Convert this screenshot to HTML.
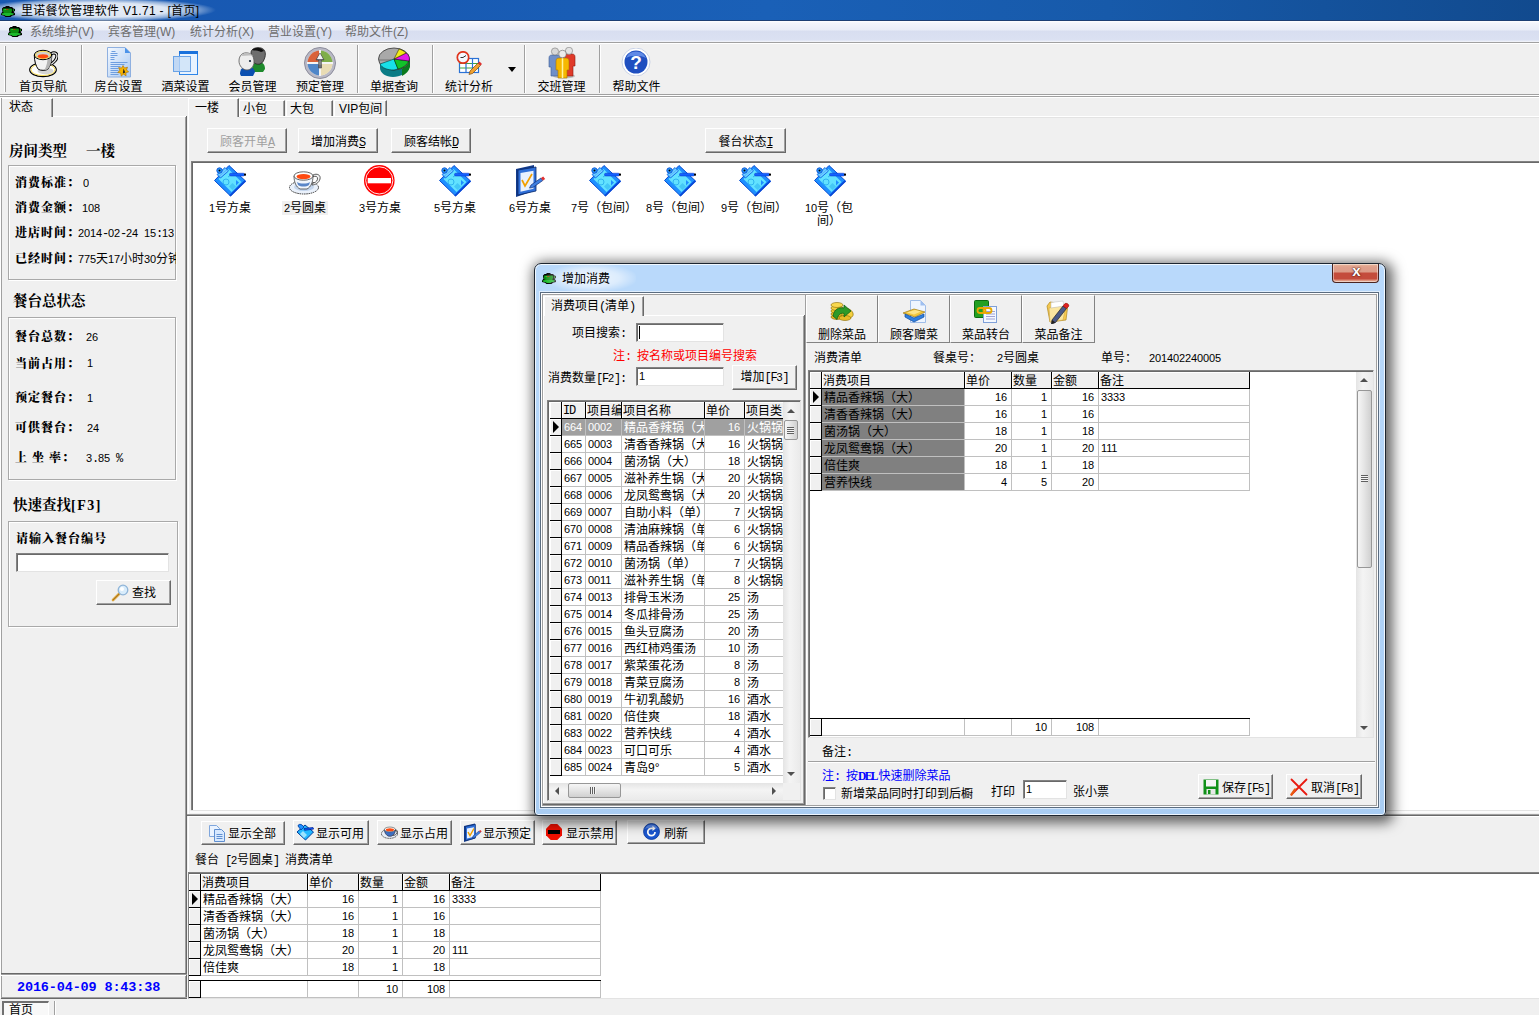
<!DOCTYPE html>
<html lang="zh-CN"><head><meta charset="utf-8"><title>里诺餐饮管理软件 V1.71 - [首页]</title>
<style>
*{box-sizing:border-box}
html,body{margin:0;padding:0}
body{width:1539px;height:1015px;overflow:hidden;background:#f0f0f0;position:relative;
 font-family:"Liberation Sans","Noto Sans CJK SC",sans-serif;font-size:12px;color:#000;line-height:14px}
.a{position:absolute}
.t{position:absolute;white-space:nowrap;height:14px;line-height:14px}
.n{font-family:"Liberation Mono",monospace;font-size:12px;letter-spacing:-1.2px}
.b{font-family:"Liberation Serif","Noto Serif CJK SC",serif;font-weight:900;letter-spacing:1px}
.h14{font-size:14.5px;letter-spacing:0;font-weight:bold}
.btn{position:absolute;background:#f0f0f0;border:1px solid;border-color:#fff #696969 #696969 #fff;box-shadow:inset -1px -1px 0 #a0a0a0, inset 1px 1px 0 #f0f0f0;text-align:center;white-space:nowrap}
.gb{position:absolute;border:1px solid #a9a9a9;box-shadow:inset 1px 1px 0 #fff,1px 1px 0 #fff}
.sunk{position:absolute;background:#fff;border:1px solid;border-color:#828282 #e3e3e3 #e3e3e3 #828282;box-shadow:inset 1px 1px 0 #696969}
.vsep{position:absolute;width:2px;border-left:1px solid #a0a0a0;border-right:1px solid #fff}
.hsep{position:absolute;height:2px;border-top:1px solid #a0a0a0;border-bottom:1px solid #fff}
.tb{position:absolute;text-align:center;width:80px;height:14px;white-space:nowrap}
.grid{position:absolute;background:#fff;overflow:hidden}
.grid .c{position:absolute;height:17px;line-height:17px;border-right:1px solid #c0c0c0;border-bottom:1px solid #c0c0c0;white-space:nowrap;overflow:hidden;padding:1px 2px 0 2px;background:#fff}
.grid .hd{background:#f0f0f0;border-right:1px solid #000;border-bottom:1px solid #000;box-shadow:inset 1px 1px 0 #fff;padding-left:1px}
.grid .ind{background:#f0f0f0;border-right:1px solid #000;border-bottom:1px solid #000;box-shadow:inset 1px 1px 0 #fff;padding:0}
.grid .r{text-align:right;padding-right:4px}
.grid .sel{background:#a0a0a0;color:#fff}
.grid .gr{background:#808080}
.tri{position:absolute;width:0;height:0;border-left:6px solid #000;border-top:6px solid transparent;border-bottom:6px solid transparent}
.d{font-family:"Liberation Sans",sans-serif;font-size:11px;letter-spacing:-.12px}
.grid .n{position:relative;top:-1px}
</style></head>
<body>
<div class="a" style="left:0;top:0;width:1539px;height:21px;background:linear-gradient(90deg,#1858b2 0%,#185ab3 25%,#1a60b7 50%,#175aaa 72%,#114a8e 100%);border-bottom:1px solid #1c3f73"></div>
<div class="a" style="left:-22px;top:-2px;width:238px;height:24px;border-radius:12px;background:radial-gradient(ellipse closest-side at 50% 50%,rgba(255,255,255,.9) 0%,rgba(255,255,255,.85) 60%,rgba(255,255,255,.5) 82%,rgba(255,255,255,0) 100%)"></div>
<svg class="a" style="left:0px;top:6px" width="15" height="11" viewBox="0 0 15 11"><path d="M6 0h3l1 1h2l1.500 1.500 1.500.5v2l-1.500.8 1.500 1.700v1.500l-3 .8-1.500 1.200h-5l-1.500-1.200-3-.8V7.500l1.500-1.700L2 4V2.500L3.500 1h1.500z" fill="#000"/><path d="M3.200 2.400h8.300l.7 1.600-1 3.500h-7.500l-1.100-3.500z" fill="#0c8c10"/><path d="M1.200 7.600l3-.6h6.800l3 .6-1 1.200-2.500.4-1 .8h-3.800l-1-.8-2.500-.4z" fill="#1cb82c"/><rect x="4.600" y="3" width="1" height="1" fill="#30ff40"/><rect x="6" y="3" width="2.400" height=".9" fill="#b04010"/><rect x="13" y="3.300" width="1" height="1.600" fill="#18a020"/></svg><div class="t" style="left:21px;top:3px;font-size:12px;height:16px;line-height:16px;letter-spacing:.3px">里诺餐饮管理软件 V1.71 - [首页]</div>
<div class="a" style="left:0;top:21px;width:1539px;height:21px;background:linear-gradient(180deg,#fff 0,#f3f5fb 2px,#e9edf7 9px,#d8def0 10px,#dbe1f2 19px,#f6f7fb 21px)"></div>
<div class="a" style="left:0;top:42px;width:1539px;height:1px;background:#a0a0a0"></div><div class="a" style="left:0;top:43px;width:1539px;height:1px;background:#fff"></div>
<svg class="a" style="left:7px;top:26px" width="15" height="11" viewBox="0 0 15 11"><path d="M6 0h3l1 1h2l1.500 1.500 1.500.5v2l-1.500.8 1.500 1.700v1.500l-3 .8-1.500 1.200h-5l-1.500-1.200-3-.8V7.500l1.500-1.700L2 4V2.500L3.500 1h1.500z" fill="#000"/><path d="M3.200 2.400h8.300l.7 1.600-1 3.500h-7.500l-1.100-3.500z" fill="#0c8c10"/><path d="M1.200 7.600l3-.6h6.800l3 .6-1 1.200-2.500.4-1 .8h-3.800l-1-.8-2.500-.4z" fill="#1cb82c"/><rect x="4.600" y="3" width="1" height="1" fill="#30ff40"/><rect x="6" y="3" width="2.400" height=".9" fill="#b04010"/><rect x="13" y="3.300" width="1" height="1.600" fill="#18a020"/></svg><div class="t" style="left:30px;top:24px;font-size:12px;color:#6d6d6d;height:16px;line-height:16px">系统维护(V)</div>
<div class="t" style="left:108px;top:24px;font-size:12px;color:#6d6d6d;height:16px;line-height:16px">宾客管理(W)</div>
<div class="t" style="left:190px;top:24px;font-size:12px;color:#6d6d6d;height:16px;line-height:16px">统计分析(X)</div>
<div class="t" style="left:268px;top:24px;font-size:12px;color:#6d6d6d;height:16px;line-height:16px">营业设置(Y)</div>
<div class="t" style="left:345px;top:24px;font-size:12px;color:#6d6d6d;height:16px;line-height:16px">帮助文件(Z)</div>
<div class="vsep" style="left:4px;top:46px;height:46px;border-left-color:#fff;border-right-color:#a0a0a0"></div>
<div class="vsep" style="left:81px;top:45px;height:48px"></div>
<div class="vsep" style="left:357px;top:45px;height:48px"></div>
<div class="vsep" style="left:432px;top:45px;height:48px"></div>
<div class="vsep" style="left:524px;top:45px;height:48px"></div>
<div class="vsep" style="left:599px;top:45px;height:48px"></div>
<div class="tb" style="left:3px;top:80px">首页导航</div>
<div class="tb" style="left:78.5px;top:80px">房台设置</div>
<div class="tb" style="left:145.5px;top:80px">酒菜设置</div>
<div class="tb" style="left:212.5px;top:80px">会员管理</div>
<div class="tb" style="left:280px;top:80px">预定管理</div>
<div class="tb" style="left:354px;top:80px">单据查询</div>
<div class="tb" style="left:429px;top:80px">统计分析</div>
<div class="tb" style="left:521.5px;top:80px">交班管理</div>
<div class="tb" style="left:596.5px;top:80px">帮助文件</div>
<svg class="a" style="left:29px;top:49px" width="29" height="29" viewBox="0 0 29 29"><ellipse cx="14" cy="20.700" rx="13.300" ry="7" fill="#fff" stroke="#000" stroke-width="1.200"/><ellipse cx="14" cy="20.700" rx="12" ry="5.800" fill="none" stroke="#f8dc50" stroke-width="1"/><ellipse cx="16.500" cy="22" rx="8" ry="3.300" fill="#d4d4d4"/>
<path d="M22 5c3-2 6-1 6 2s-3 7-7 8.500" fill="none" stroke="#000" stroke-width="3.200"/><path d="M22 5c3-2 6-1 6 2s-3 7-7 8.500" fill="none" stroke="#e8e8e8" stroke-width="1.300"/>
<path d="M5.300 6c0 6 1.500 11 4 14.300 2 1.400 7.500 1.400 9.500 0 2.500-3.300 4-8.300 4-14.300z" fill="#f2f2f2" stroke="#000" stroke-width="1"/><path d="M15.500 21c1.500 0 2.600-.3 3.300-.8 2.500-3.300 4-8.200 4-14.200h-4c0 6-1.200 11.500-3.300 15z" fill="#b4b4b4"/>
<ellipse cx="14" cy="6" rx="8.700" ry="4.700" fill="#d0d0d0" stroke="#000" stroke-width="1"/><ellipse cx="14" cy="6" rx="7.500" ry="3.600" fill="none" stroke="#f8dc50" stroke-width="1"/><ellipse cx="14" cy="7.300" rx="5.200" ry="2.100" fill="#ff4a10"/></svg>
<svg class="a" style="left:107px;top:47px" width="25" height="31" viewBox="0 0 25 31"><defs><linearGradient id="dg" x1="0" y1="0" x2="1" y2="1"><stop offset="0" stop-color="#f4f9ff"/><stop offset="1" stop-color="#a9c9f2"/></linearGradient></defs>
<path d="M.5 .5h17.500l5.500 5.500v24h-23z" fill="url(#dg)" stroke="#8fb0e0" stroke-width="1"/><path d="M18 .5v5.500h5.500z" fill="#4b93ea"/>
<g stroke="#6f9fe0" stroke-width="1"><path d="M4.500 4.500h4M3.500 6.500h7M3.500 8.500h7M3.500 10.500h4M3.500 12.500h4M3.500 15.500h17M3.500 17.500h14M3.500 19.500h10M3.500 21.500h8M3.500 23.500h8M3.500 25.500h8M3.500 27.500h8"/></g>
<path d="M16 18.500l1.500 2.500 3-.8-1 2.800 2.200 1.800-2.800 1 .2 3-2.600-1.600-2.300 1.900-.5-3-2.900-.6 2-2.200-1.200-2.700 3 .4z" fill="#f6b400" stroke="#a86a00" stroke-width=".6"/><path d="M16.500 21.500l1.800 4-2.500 1z" fill="#222"/></svg>
<svg class="a" style="left:173px;top:51px" width="26" height="24" viewBox="0 0 26 24"><rect x="6.500" y=".5" width="18" height="23" fill="#e8f3ff" stroke="#2f86e8" stroke-width="1"/><rect x="6" y="0" width="19" height="3" fill="#1a72dc"/>
<rect x=".5" y="5.500" width="17" height="15" fill="#b8d4f4" fill-opacity=".85" stroke="#6aa3e6" stroke-width="1"/><rect x="7" y="6" width="10" height="14" fill="#dcebfb" fill-opacity=".7"/></svg>
<svg class="a" style="left:238px;top:47px" width="29" height="30" viewBox="0 0 29 30"><path d="M14 22c0-5 3-7 7-7s6 3 6 7l-2 3h-10z" fill="#1e8a2c"/><path d="M13 5c1-4 6-5 10-4s5 5 4 9c-1 3-2 6-5 7s-7-1-8-4z" fill="#6e6e6e" stroke="#222" stroke-width=".8"/><path d="M14 3c3-3 9-3 12 1l-3 1c-3-2-6-1-9-2z" fill="#111"/>
<path d="M2 27c0-5 3-8 7-8s7 2 8 6l-2 4h-12z" fill="#0b4fb0"/><path d="M1 14c0-6 4-9 9-8s6 5 6 9-3 8-7 8-8-4-8-9z" fill="#ededed" stroke="#555" stroke-width=".8"/><path d="M3 9c3-4 9-4 12 0c-4-1-8 0-12 0z" fill="#bdbdbd"/><circle cx="12" cy="14" r="1.100" fill="#123"/></svg>
<svg class="a" style="left:304px;top:47px" width="32" height="32" viewBox="0 0 32 32"><circle cx="16" cy="16" r="15.500" fill="#b9b9c6" stroke="#8d8d9c" stroke-width="1"/><circle cx="16" cy="16" r="12.500" fill="#eee"/>
<path d="M16 16L16 3.500A12.500 12.500 0 0 1 28.500 16z" fill="#7fae4a"/><path d="M16 16L28.500 16A12.500 12.500 0 0 1 16 28.500z" fill="#e9dcb4"/>
<path d="M16 16L16 28.500A12.500 12.500 0 0 1 3.500 16z" fill="#4f86c8"/><path d="M16 16L3.500 16A12.500 12.500 0 0 1 16 3.500z" fill="#d9623a"/>
<path d="M3 16h26M16 3v26" stroke="#f4f4f4" stroke-width="2"/><path d="M16 6l4 7h-2.500v8h-3v-8h-2.500z" fill="#6d6d78" stroke="#444" stroke-width=".6"/><path d="M16 6.500l3 5.500h-6z" fill="#f4f4f4"/><circle cx="16" cy="16" r="2" fill="#888"/></svg>
<svg class="a" style="left:378px;top:47px" width="33" height="32" viewBox="0 0 33 32"><path d="M2 12v9c0 5 6 9 13 9s14-4 16-9l1-9z" fill="#0b7c86"/><path d="M16 13l8 8v8c4-2 7-5 8-9v-7z" fill="#0a7a1e"/>
<ellipse cx="16" cy="12" rx="15.500" ry="11" fill="#a9a9a9" stroke="#333" stroke-width=".8"/>
<path d="M16 12L2 17c2 4 7 6 14 6l4-1z" fill="#18e0e8" stroke="#033" stroke-width=".6"/><path d="M16 12l4 10c5-1 9-4 11-8z" fill="#12c22a" stroke="#030" stroke-width=".6"/>
<path d="M16 12l15 2c1-3 0-6-3-8z" fill="#e31be8" stroke="#303" stroke-width=".6"/><path d="M16 12l12-6c-2-2-4-3-7-4z" fill="#f2ea18" stroke="#330" stroke-width=".6"/>
<path d="M1 13h12" stroke="#666" stroke-width=".8"/></svg>
<svg class="a" style="left:456px;top:51px" width="27" height="24" viewBox="0 0 27 24"><rect x="3.500" y="7.500" width="19" height="14" fill="#fff" stroke="#2b72d6" stroke-width="1.200"/><path d="M3.500 12.500h19M3.500 17h19" stroke="#3fa640" stroke-width="1.200"/><path d="M10 7.500v14M16.500 7.500v14" stroke="#2b72d6" stroke-width="1.200"/>
<circle cx="7" cy="6.500" r="5.700" fill="#f4f8ff" stroke="#e0341c" stroke-width="1.700"/><path d="M7 6.500l3-2M7 6.500h-2.500" stroke="#333" stroke-width="1"/>
<path d="M14 20l8-8 2.500 2.500-8 8-3.500 1z" fill="#f0a030" stroke="#7a4a10" stroke-width=".7"/><path d="M22 12l1.500-1.500 2.500 2.500-1.500 1.500z" fill="#e03030"/></svg>
<div class="a" style="left:508px;top:67px;width:0;height:0;border-top:5px solid #000;border-left:4.500px solid transparent;border-right:4.500px solid transparent"></div>
<svg class="a" style="left:548px;top:47px" width="28" height="32" viewBox="0 0 28 32"><ellipse cx="16" cy="29" rx="11" ry="2.500" fill="#999" fill-opacity=".6"/>
<path d="M1 11c0-2 1-3 3-3h6c2 0 3 1 3 3v9h-2v9h-8v-9h-2z" fill="#6f8fc8" stroke="#3b5a96" stroke-width=".6"/><circle cx="7" cy="4.500" r="3.600" fill="#d8d8d8" stroke="#777" stroke-width=".6"/>
<path d="M15 10c0-2 1-3 3-3h6c2 0 3 1 3 3v9h-2v10h-8v-10h-2z" fill="#e03a2a" stroke="#8a1c10" stroke-width=".6"/><circle cx="21" cy="3.800" r="3.600" fill="#e4e4e4" stroke="#777" stroke-width=".6"/>
<path d="M8 14c0-2 1-3 3-3h7c2 0 3 1 3 3v9h-2v8h-9v-8h-2z" fill="#f6b800" stroke="#a87400" stroke-width=".6"/><path d="M14.500 11v20" stroke="#fff4a0" stroke-width="1.500"/><circle cx="14.500" cy="7" r="3.800" fill="#ececec" stroke="#666" stroke-width=".6"/></svg>
<svg class="a" style="left:621px;top:48px" width="30" height="28" viewBox="0 0 30 28"><circle cx="15" cy="14" r="14" fill="#fff" stroke="#c9d2e6" stroke-width="1"/><circle cx="15" cy="14" r="11.500" fill="#1f4fc0"/><path d="M5 10a11 11 0 0 1 20 0c-6-3-14-3-20 0z" fill="#5f8ae6"/>
<text x="15" y="21" font-family="Liberation Sans,sans-serif" font-weight="bold" font-size="19" fill="#fff" text-anchor="middle">?</text></svg>
<div class="a" style="left:0;top:94px;width:1539px;height:1px;background:#a0a0a0"></div><div class="a" style="left:0;top:95px;width:1539px;height:1px;background:#fff"></div>
<div class="a" style="left:0;top:96px;width:1539px;height:1px;background:#a0a0a0"></div><div class="a" style="left:0;top:97px;width:1539px;height:1px;background:#fff"></div>
<div class="a" style="left:0;top:98px;width:1px;height:900px;background:#fff"></div>
<div class="a" style="left:1px;top:98px;width:1px;height:900px;background:#a0a0a0"></div>
<div class="a" style="left:2px;top:98px;width:51px;height:19px;border-top:1px solid #fff;border-right:1px solid #696969;box-shadow:inset -1px 0 0 #a0a0a0"></div>
<div class="t" style="left:9px;top:100px">状态</div>
<div class="a" style="left:53px;top:116px;width:133px;height:1px;background:#fff"></div>
<div class="a" style="left:185px;top:117px;width:1px;height:881px;background:#a0a0a0"></div><div class="a" style="left:186px;top:116px;width:1px;height:882px;background:#696969"></div>
<div class="t b h14" style="left:9px;top:143px;height:17px;line-height:17px">房间类型</div><div class="t b h14" style="left:86px;top:143px;height:17px;line-height:17px">一楼</div>
<div class="gb" style="left:8px;top:165px;width:168px;height:115px"></div>
<div class="t b" style="left:15px;top:176px">消费标准：</div><div class="t" style="left:83px;top:176px;max-width:93px;overflow:hidden"><span class="n"><span class="d">0</span></span></div>
<div class="t b" style="left:15px;top:201px">消费金额：</div><div class="t" style="left:82px;top:201px;max-width:94px;overflow:hidden"><span class="n"><span class="d">108</span></span></div>
<div class="t b" style="left:15px;top:226px">进店时间：</div><div class="t" style="left:78px;top:226px;max-width:98px;overflow:hidden"><span class="n"><span class="d">2014</span>-<span class="d">02</span>-<span class="d">24</span>&nbsp;<span class="d">15</span>:<span class="d">13</span></span></div>
<div class="t b" style="left:15px;top:252px">已经时间：</div><div class="t" style="left:78px;top:252px;max-width:98px;overflow:hidden"><span class="n"><span class="d">775</span></span>天<span class="n"><span class="d">17</span></span>小时<span class="n"><span class="d">30</span></span>分钟</div>
<div class="t b h14" style="left:13px;top:293px;height:17px;line-height:17px">餐台总状态</div>
<div class="gb" style="left:8px;top:317px;width:168px;height:163px"></div>
<div class="t b" style="left:15px;top:330px">餐台总数：</div><div class="t n" style="left:86px;top:330px"><span class="d">26</span></div>
<div class="t b" style="left:15px;top:357px">当前占用：</div><div class="t n" style="left:87px;top:356px"><span class="d">1</span></div>
<div class="t b" style="left:15px;top:391px">预定餐台：</div><div class="t n" style="left:87px;top:391px"><span class="d">1</span></div>
<div class="t b" style="left:15px;top:421px">可供餐台：</div><div class="t n" style="left:87px;top:421px"><span class="d">24</span></div>
<div class="t b" style="left:15px;top:451px">上 坐 率：</div><div class="t n" style="left:86px;top:451px"><span class="d">3</span>.<span class="d">85</span> %</div>
<div class="t b h14" style="left:13px;top:497px;height:17px;line-height:17px">快速查找<span style="letter-spacing:1.500px;font-size:14px">[F3]</span></div>
<div class="gb" style="left:8px;top:521px;width:170px;height:106px"></div>
<div class="t b" style="left:16px;top:532px">请输入餐台编号</div>
<div class="sunk" style="left:16px;top:553px;width:153px;height:19px"></div>
<div class="btn" style="left:96px;top:580px;width:75px;height:25px"></div>
<svg class="a" style="left:111px;top:584px" width="18" height="18" viewBox="0 0 18 18"><path d="M2 16l7-7" stroke="#d9a23a" stroke-width="2.600" stroke-linecap="round"/><path d="M2 16l7-7" stroke="#8a5a10" stroke-width=".6"/><circle cx="12" cy="6" r="4.800" fill="#d8ecfb" stroke="#8fb4d8" stroke-width="1.300"/><circle cx="11" cy="5" r="2" fill="#fff"/></svg>
<div class="t" style="left:132px;top:586px">查找</div>
<div class="a" style="left:1px;top:973px;width:186px;height:1px;background:#696969"></div><div class="a" style="left:1px;top:974px;width:186px;height:1px;background:#a0a0a0"></div><div class="a" style="left:1px;top:975px;width:185px;height:1px;background:#fff"></div>
<div class="a" style="left:1px;top:997px;width:186px;height:1px;background:#a0a0a0"></div><div class="a" style="left:1px;top:998px;width:186px;height:1px;background:#696969"></div>
<div class="t" style="left:17px;top:980px;font:bold 13.500px 'Liberation Mono',monospace;color:#0000ff;height:16px;line-height:16px;letter-spacing:-.15px">2016-04-09 8:43:38</div>
<div class="a" style="left:2px;top:1001px;width:47px;height:14px;background:#f8f8f8;border-top:2px solid #707070;border-left:2px solid #707070;border-right:1px solid #fff"></div>
<div class="t" style="left:9px;top:1003px">首页</div>
<div class="vsep" style="left:54px;top:1001px;height:14px"></div>
<div class="a" style="left:188px;top:98px;width:51px;height:19px;border-top:1px solid #fff;border-left:1px solid #fff;border-right:1px solid #696969;box-shadow:inset -1px 0 0 #a0a0a0"></div>
<div class="t" style="left:195px;top:101px">一楼</div>
<div class="a" style="left:239px;top:100px;width:46px;height:16px;border-top:1px solid #fff;border-left:1px solid #fff;border-right:1px solid #696969;box-shadow:inset -1px 0 0 #a0a0a0"></div>
<div class="t" style="left:243px;top:102px">小包</div>
<div class="a" style="left:286px;top:100px;width:47px;height:16px;border-top:1px solid #fff;border-left:1px solid #fff;border-right:1px solid #696969;box-shadow:inset -1px 0 0 #a0a0a0"></div>
<div class="t" style="left:290px;top:102px">大包</div>
<div class="a" style="left:334px;top:100px;width:53px;height:16px;border-top:1px solid #fff;border-left:1px solid #fff;border-right:1px solid #696969;box-shadow:inset -1px 0 0 #a0a0a0"></div>
<div class="t" style="left:339px;top:102px">VIP包间</div>
<div class="a" style="left:239px;top:116px;width:1300px;height:1px;background:#fff"></div><div class="a" style="left:239px;top:117px;width:1300px;height:1px;background:#e3e3e3"></div>
<div class="a" style="left:188px;top:117px;width:1px;height:881px;background:#fff"></div>
<div class="btn" style="left:207px;top:128px;width:80px;height:25px;line-height:25px;padding-top:1px;color:#a0a0a0;">顾客开单<span class="n" style="text-decoration:underline">A</span></div>
<div class="btn" style="left:298px;top:128px;width:80px;height:25px;line-height:25px;padding-top:1px;">增加消费<span class="n" style="text-decoration:underline">S</span></div>
<div class="btn" style="left:391px;top:128px;width:80px;height:25px;line-height:25px;padding-top:1px;">顾客结帐<span class="n" style="text-decoration:underline">D</span></div>
<div class="btn" style="left:705px;top:128px;width:81px;height:25px;line-height:25px;padding-top:1px;">餐台状态<span class="n" style="text-decoration:underline">I</span></div>
<div class="a" style="left:191px;top:161px;width:1348px;height:649px;background:#fff;border-left:1px solid #828282;border-top:1px solid #828282;box-shadow:inset 1px 1px 0 #696969"></div>
<div class="a" style="left:191px;top:810px;width:1348px;height:1px;background:#e3e3e3"></div><div class="a" style="left:190px;top:811px;width:1349px;height:2px;background:#fbfbfb"></div>
<div class="a" style="left:187px;top:814px;width:1352px;height:1px;background:#a0a0a0"></div><div class="a" style="left:187px;top:815px;width:1352px;height:1px;background:#696969"></div><div class="a" style="left:188px;top:816px;width:1351px;height:1px;background:#fff"></div>
<svg class="a" style="left:214px;top:165px" width="32" height="32" viewBox="0 0 32 32"><path d="M15 .5L31.500 16 16.500 31 .5 15.500z" fill="#1e8fff" stroke="#0a4ad0" stroke-width="1"/><path d="M16.500 31.600L32 16.600l-1.200-1.600L15.300 30.200z" fill="#0848d8"/>
<path d="M14.500 4L27.500 17 17.500 27 4.500 14z" fill="#62e2ff"/><path d="M22 15l3 2.500-3 3z" fill="#1e8fff"/>
<circle cx="12" cy="17" r="3" fill="none" stroke="#2fb4f0" stroke-width="1"/><path d="M15 21.500l3.500-3.500 3.500 3.500-3.500 3.500z" fill="#38bdf2" fill-opacity=".7"/><path d="M14 12l3-2" stroke="#2fb4f0" stroke-width="1"/>
<path d="M3 9.500L11 2.500l3.500 3.500L6.500 13z" fill="#52bcff" stroke="#0a60e0" stroke-width=".8"/><path d="M5 10l7-6M6.500 11.500l7-6" stroke="#8fdcff" stroke-width=".8"/>
<circle cx="5.500" cy="5.500" r="2.700" fill="#2c9cff" stroke="#0a50d0" stroke-width=".9"/><circle cx="5.500" cy="5.500" r="1" fill="#000"/>
<rect x="15.500" y="8.200" width="15" height="2.800" rx="1.300" fill="#1262ff" stroke="#0a30c0" stroke-width=".5"/><rect x="30" y="8.600" width="2" height="2" fill="#000"/></svg>
<div class="a" style="left:190px;top:202px;width:80px;text-align:center;line-height:12px"><span class=n><span class="d">1</span></span>号方桌</div>
<svg class="a" style="left:289px;top:170px" width="32" height="25" viewBox="0 0 32 25"><ellipse cx="15" cy="17.500" rx="14.500" ry="6.500" fill="#eaf1fb" stroke="#222" stroke-width=".9" stroke-dasharray="1.500 .7"/><ellipse cx="15" cy="17" rx="10" ry="4" fill="#c4d6ee"/>
<path d="M24 5c4-2 8 0 7 4s-5 6-8 6l0-1.800c2 0 5-1.200 5.500-4s-2-3.500-4.500-2.500z" fill="#f4f4f4" stroke="#333" stroke-width=".8"/>
<path d="M5 6c0 6 2 11 6 13h7c4-2 6-7 6-13z" fill="#f0f5fc" stroke="#444" stroke-width=".8"/><path d="M8 12c3 2 10 2 13 0l-1 3c-3 2-8 2-11 0z" fill="#5a86c8"/>
<ellipse cx="14.500" cy="6" rx="9.500" ry="4.200" fill="#fff" stroke="#555" stroke-width=".9"/><ellipse cx="14.500" cy="6.600" rx="7" ry="2.700" fill="#ff4a10"/></svg>
<div class="a" style="left:282px;top:201px;width:46px;height:14px;background:#f0f0f0"></div>
<div class="a" style="left:265px;top:202px;width:80px;text-align:center;line-height:12px"><span class=n><span class="d">2</span></span>号圆桌</div>
<svg class="a" style="left:364px;top:165px" width="32" height="32" viewBox="0 0 32 32"><circle cx="15.300" cy="15.400" r="15.300" fill="#ff0000"/><circle cx="15.300" cy="15.400" r="13.600" fill="none" stroke="#fff" stroke-width=".9"/><rect x="3.700" y="13" width="23.300" height="5.300" fill="#fff"/></svg>
<div class="a" style="left:340px;top:202px;width:80px;text-align:center;line-height:12px"><span class=n><span class="d">3</span></span>号方桌</div>
<svg class="a" style="left:439px;top:165px" width="32" height="32" viewBox="0 0 32 32"><path d="M15 .5L31.500 16 16.500 31 .5 15.500z" fill="#1e8fff" stroke="#0a4ad0" stroke-width="1"/><path d="M16.500 31.600L32 16.600l-1.200-1.600L15.300 30.200z" fill="#0848d8"/>
<path d="M14.500 4L27.500 17 17.500 27 4.500 14z" fill="#62e2ff"/><path d="M22 15l3 2.500-3 3z" fill="#1e8fff"/>
<circle cx="12" cy="17" r="3" fill="none" stroke="#2fb4f0" stroke-width="1"/><path d="M15 21.500l3.500-3.500 3.500 3.500-3.500 3.500z" fill="#38bdf2" fill-opacity=".7"/><path d="M14 12l3-2" stroke="#2fb4f0" stroke-width="1"/>
<path d="M3 9.500L11 2.500l3.500 3.500L6.500 13z" fill="#52bcff" stroke="#0a60e0" stroke-width=".8"/><path d="M5 10l7-6M6.500 11.500l7-6" stroke="#8fdcff" stroke-width=".8"/>
<circle cx="5.500" cy="5.500" r="2.700" fill="#2c9cff" stroke="#0a50d0" stroke-width=".9"/><circle cx="5.500" cy="5.500" r="1" fill="#000"/>
<rect x="15.500" y="8.200" width="15" height="2.800" rx="1.300" fill="#1262ff" stroke="#0a30c0" stroke-width=".5"/><rect x="30" y="8.600" width="2" height="2" fill="#000"/></svg>
<div class="a" style="left:415px;top:202px;width:80px;text-align:center;line-height:12px"><span class=n><span class="d">5</span></span>号方桌</div>
<svg class="a" style="left:514px;top:165px" width="32" height="32" viewBox="0 0 32 32"><path d="M2 4l18-4v26l-18 6z" fill="#123a8a"/><path d="M4 5l18-3v24l-18 4z" fill="#2f6fd8" stroke="#0a2a6a" stroke-width=".8"/><path d="M6.500 8l13-2.200v18l-13 3z" fill="#e8f1ff"/>
<path d="M8 15l3 6 7-12" fill="none" stroke="#f2a000" stroke-width="1.700"/>
<path d="M17 20l10-7 1.800 2.500-10 7-3.300.6z" fill="#3f7fe0" stroke="#12307a" stroke-width=".7"/><path d="M27 13l2.200-1.500 2 2.400-2.400 1.600z" fill="#e03030"/></svg>
<div class="a" style="left:490px;top:202px;width:80px;text-align:center;line-height:12px"><span class=n><span class="d">6</span></span>号方桌</div>
<svg class="a" style="left:589px;top:165px" width="32" height="32" viewBox="0 0 32 32"><path d="M15 .5L31.500 16 16.500 31 .5 15.500z" fill="#1e8fff" stroke="#0a4ad0" stroke-width="1"/><path d="M16.500 31.600L32 16.600l-1.200-1.600L15.300 30.200z" fill="#0848d8"/>
<path d="M14.500 4L27.500 17 17.500 27 4.500 14z" fill="#62e2ff"/><path d="M22 15l3 2.500-3 3z" fill="#1e8fff"/>
<circle cx="12" cy="17" r="3" fill="none" stroke="#2fb4f0" stroke-width="1"/><path d="M15 21.500l3.500-3.500 3.500 3.500-3.500 3.500z" fill="#38bdf2" fill-opacity=".7"/><path d="M14 12l3-2" stroke="#2fb4f0" stroke-width="1"/>
<path d="M3 9.500L11 2.500l3.500 3.500L6.500 13z" fill="#52bcff" stroke="#0a60e0" stroke-width=".8"/><path d="M5 10l7-6M6.500 11.500l7-6" stroke="#8fdcff" stroke-width=".8"/>
<circle cx="5.500" cy="5.500" r="2.700" fill="#2c9cff" stroke="#0a50d0" stroke-width=".9"/><circle cx="5.500" cy="5.500" r="1" fill="#000"/>
<rect x="15.500" y="8.200" width="15" height="2.800" rx="1.300" fill="#1262ff" stroke="#0a30c0" stroke-width=".5"/><rect x="30" y="8.600" width="2" height="2" fill="#000"/></svg>
<div class="a" style="left:564px;top:202px;width:80px;text-align:center;line-height:12px"><span class=n><span class="d">7</span></span>号（包间）</div>
<svg class="a" style="left:664px;top:165px" width="32" height="32" viewBox="0 0 32 32"><path d="M15 .5L31.500 16 16.500 31 .5 15.500z" fill="#1e8fff" stroke="#0a4ad0" stroke-width="1"/><path d="M16.500 31.600L32 16.600l-1.200-1.600L15.300 30.200z" fill="#0848d8"/>
<path d="M14.500 4L27.500 17 17.500 27 4.500 14z" fill="#62e2ff"/><path d="M22 15l3 2.500-3 3z" fill="#1e8fff"/>
<circle cx="12" cy="17" r="3" fill="none" stroke="#2fb4f0" stroke-width="1"/><path d="M15 21.500l3.500-3.500 3.500 3.500-3.500 3.500z" fill="#38bdf2" fill-opacity=".7"/><path d="M14 12l3-2" stroke="#2fb4f0" stroke-width="1"/>
<path d="M3 9.500L11 2.500l3.500 3.500L6.500 13z" fill="#52bcff" stroke="#0a60e0" stroke-width=".8"/><path d="M5 10l7-6M6.500 11.500l7-6" stroke="#8fdcff" stroke-width=".8"/>
<circle cx="5.500" cy="5.500" r="2.700" fill="#2c9cff" stroke="#0a50d0" stroke-width=".9"/><circle cx="5.500" cy="5.500" r="1" fill="#000"/>
<rect x="15.500" y="8.200" width="15" height="2.800" rx="1.300" fill="#1262ff" stroke="#0a30c0" stroke-width=".5"/><rect x="30" y="8.600" width="2" height="2" fill="#000"/></svg>
<div class="a" style="left:639px;top:202px;width:80px;text-align:center;line-height:12px"><span class=n><span class="d">8</span></span>号（包间）</div>
<svg class="a" style="left:739px;top:165px" width="32" height="32" viewBox="0 0 32 32"><path d="M15 .5L31.500 16 16.500 31 .5 15.500z" fill="#1e8fff" stroke="#0a4ad0" stroke-width="1"/><path d="M16.500 31.600L32 16.600l-1.200-1.600L15.300 30.200z" fill="#0848d8"/>
<path d="M14.500 4L27.500 17 17.500 27 4.500 14z" fill="#62e2ff"/><path d="M22 15l3 2.500-3 3z" fill="#1e8fff"/>
<circle cx="12" cy="17" r="3" fill="none" stroke="#2fb4f0" stroke-width="1"/><path d="M15 21.500l3.500-3.500 3.500 3.500-3.500 3.500z" fill="#38bdf2" fill-opacity=".7"/><path d="M14 12l3-2" stroke="#2fb4f0" stroke-width="1"/>
<path d="M3 9.500L11 2.500l3.500 3.500L6.500 13z" fill="#52bcff" stroke="#0a60e0" stroke-width=".8"/><path d="M5 10l7-6M6.500 11.500l7-6" stroke="#8fdcff" stroke-width=".8"/>
<circle cx="5.500" cy="5.500" r="2.700" fill="#2c9cff" stroke="#0a50d0" stroke-width=".9"/><circle cx="5.500" cy="5.500" r="1" fill="#000"/>
<rect x="15.500" y="8.200" width="15" height="2.800" rx="1.300" fill="#1262ff" stroke="#0a30c0" stroke-width=".5"/><rect x="30" y="8.600" width="2" height="2" fill="#000"/></svg>
<div class="a" style="left:714px;top:202px;width:80px;text-align:center;line-height:12px"><span class=n><span class="d">9</span></span>号（包间）</div>
<svg class="a" style="left:814px;top:165px" width="32" height="32" viewBox="0 0 32 32"><path d="M15 .5L31.500 16 16.500 31 .5 15.500z" fill="#1e8fff" stroke="#0a4ad0" stroke-width="1"/><path d="M16.500 31.600L32 16.600l-1.200-1.600L15.300 30.200z" fill="#0848d8"/>
<path d="M14.500 4L27.500 17 17.500 27 4.500 14z" fill="#62e2ff"/><path d="M22 15l3 2.500-3 3z" fill="#1e8fff"/>
<circle cx="12" cy="17" r="3" fill="none" stroke="#2fb4f0" stroke-width="1"/><path d="M15 21.500l3.500-3.500 3.500 3.500-3.500 3.500z" fill="#38bdf2" fill-opacity=".7"/><path d="M14 12l3-2" stroke="#2fb4f0" stroke-width="1"/>
<path d="M3 9.500L11 2.500l3.500 3.500L6.500 13z" fill="#52bcff" stroke="#0a60e0" stroke-width=".8"/><path d="M5 10l7-6M6.500 11.500l7-6" stroke="#8fdcff" stroke-width=".8"/>
<circle cx="5.500" cy="5.500" r="2.700" fill="#2c9cff" stroke="#0a50d0" stroke-width=".9"/><circle cx="5.500" cy="5.500" r="1" fill="#000"/>
<rect x="15.500" y="8.200" width="15" height="2.800" rx="1.300" fill="#1262ff" stroke="#0a30c0" stroke-width=".5"/><rect x="30" y="8.600" width="2" height="2" fill="#000"/></svg>
<div class="a" style="left:789px;top:202px;width:80px;text-align:center;line-height:12px"><span class=n><span class="d">10</span></span>号（包<br>间）</div>
<div class="btn" style="left:201px;top:821px;width:84px;height:24px"></div>
<svg class="a" style="left:208px;top:824px" width="18" height="18" viewBox="0 0 18 18"><path d="M1.500 1.500h7l3 3v8h-10z" fill="#eaf3ff" stroke="#7fa6dc"/><path d="M6.500 5.500h7l3 3v9h-10z" fill="#d6e8ff" stroke="#5f8fd0"/><path d="M8.500 10.500h6M8.500 12.500h6M8.500 14.500h6" stroke="#5f8fd0"/></svg>
<div class="t" style="left:228px;top:827px">显示全部</div>
<div class="btn" style="left:293px;top:820px;width:76px;height:25px"></div>
<svg class="a" style="left:296px;top:823px" width="18" height="18" viewBox="0 0 18 18"><path d="M9 2L17.500 9 9.500 17 1 9z" fill="#22b8ff" stroke="#003a9a" stroke-width="1"/><path d="M2 3c0-2 3-2 4-1l2 2-3 3z" fill="#1e90ff" stroke="#003a9a" stroke-width=".8"/><path d="M8 5.500l9-1 .6 1.600-9 1.200z" fill="#1060ff" stroke="#001a8a" stroke-width=".7"/><path d="M7 8l4 4-3 3-4-4z" fill="#9be4ff"/></svg>
<div class="t" style="left:316px;top:827px">显示可用</div>
<div class="btn" style="left:377px;top:820px;width:75px;height:25px"></div>
<svg class="a" style="left:381px;top:825px" width="17" height="14" viewBox="0 0 20 16"><ellipse cx="10" cy="10" rx="9.500" ry="5.500" fill="#e8eef8" stroke="#222" stroke-width=".9" stroke-dasharray="1.400 .6"/><path d="M4 5c0 4 2 7 5 8h3c3-1 5-4 5-8z" fill="#3f6fc0" stroke="#223" stroke-width=".7"/><ellipse cx="10.500" cy="5" rx="6.500" ry="2.800" fill="#fff" stroke="#444" stroke-width=".7"/><ellipse cx="10.500" cy="5.300" rx="4.800" ry="1.800" fill="#ff4a10"/><path d="M16 6c3-1 4 1 3 3s-3 3-5 3" fill="none" stroke="#333" stroke-width="1"/></svg>
<div class="t" style="left:400px;top:827px">显示占用</div>
<div class="btn" style="left:460px;top:820px;width:75px;height:25px"></div>
<svg class="a" style="left:463px;top:823px" width="19" height="19" viewBox="0 0 19 19"><path d="M1 3l11-2.500v15l-11 3.500z" fill="#123a8a"/><path d="M2.500 3.500l10-2v13.500l-10 2.500z" fill="#2f6fd8" stroke="#0a2a6a" stroke-width=".6"/><path d="M4 5.500l7-1.200v9.500l-7 1.800z" fill="#e8f1ff"/><path d="M5 9l2 3.500 4-7" fill="none" stroke="#f2a000" stroke-width="1.500"/><path d="M10 13l6-5 1.400 1.600-6 5-2 .5z" fill="#3f7fe0" stroke="#12307a" stroke-width=".5"/><path d="M16 8l1.300-1 1.400 1.500-1.300 1.100z" fill="#e03030"/></svg>
<div class="t" style="left:483px;top:827px">显示预定</div>
<div class="btn" style="left:542px;top:820px;width:75px;height:25px"></div>
<svg class="a" style="left:546px;top:824px" width="16" height="16" viewBox="0 0 16 16"><path d="M4.700 0h6.600l4.700 4.700v6.600l-4.700 4.700h-6.600l-4.700-4.700v-6.600z" fill="#f01000"/><rect x="2" y="6" width="12" height="4" fill="#000"/></svg>
<div class="t" style="left:566px;top:827px">显示禁用</div>
<div class="btn" style="left:627px;top:820px;width:78px;height:24px"></div>
<svg class="a" style="left:643px;top:823px" width="17" height="17" viewBox="0 0 17 17"><circle cx="8.500" cy="8.500" r="8" fill="#1a56d0" stroke="#0c3a9c" stroke-width=".8"/><path d="M2 6a7 7 0 0 1 13 0c-4-2-9-2-13 0z" fill="#5a8cf0"/><path d="M12 9a3.600 3.600 0 1 1-3.600-3.600h1.500" fill="none" stroke="#fff" stroke-width="1.800"/><path d="M9.500 2.800l3.200 2.600-3.200 2.600z" fill="#fff"/></svg>
<div class="t" style="left:664px;top:827px">刷新</div>
<div class="t" style="left:195px;top:853px">餐台<span class="n">&nbsp;[<span class="d">2</span></span>号圆桌<span class="n">]&nbsp;</span>消费清单</div>
<div class="a" style="left:188px;top:872px;width:1351px;height:127px;background:#fff;border-top:1px solid #828282;border-left:1px solid #828282;border-bottom:1px solid #e3e3e3"></div>
<div class="a" style="left:189px;top:873px;width:1350px;height:1px;background:#696969"></div>
<div class="grid" style="left:189px;top:874px;width:413px;height:124px">
<div class="c ind" style="left:0;top:0;width:12px"></div><div class="c hd" style="left:12px;top:0;width:107px">消费项目</div><div class="c hd" style="left:119px;top:0;width:51px">单价</div><div class="c hd" style="left:170px;top:0;width:44px">数量</div><div class="c hd" style="left:214px;top:0;width:47px">金额</div><div class="c hd" style="left:261px;top:0;width:151px">备注</div>
<div class="c ind" style="left:0;top:17px;width:12px"><div class="tri" style="left:3px;top:2px"></div></div><div class="c" style="left:12px;top:17px;width:107px">精品香辣锅（大）</div><div class="c r" style="left:119px;top:17px;width:51px"><span class="n"><span class="d">16</span></span></div><div class="c r" style="left:170px;top:17px;width:44px"><span class="n"><span class="d">1</span></span></div><div class="c r" style="left:214px;top:17px;width:47px"><span class="n"><span class="d">16</span></span></div><div class="c" style="left:261px;top:17px;width:151px"><span class="n"><span class="d">3333</span></span></div>
<div class="c ind" style="left:0;top:34px;width:12px"></div><div class="c" style="left:12px;top:34px;width:107px">清香香辣锅（大）</div><div class="c r" style="left:119px;top:34px;width:51px"><span class="n"><span class="d">16</span></span></div><div class="c r" style="left:170px;top:34px;width:44px"><span class="n"><span class="d">1</span></span></div><div class="c r" style="left:214px;top:34px;width:47px"><span class="n"><span class="d">16</span></span></div><div class="c" style="left:261px;top:34px;width:151px"></div>
<div class="c ind" style="left:0;top:51px;width:12px"></div><div class="c" style="left:12px;top:51px;width:107px">菌汤锅（大）</div><div class="c r" style="left:119px;top:51px;width:51px"><span class="n"><span class="d">18</span></span></div><div class="c r" style="left:170px;top:51px;width:44px"><span class="n"><span class="d">1</span></span></div><div class="c r" style="left:214px;top:51px;width:47px"><span class="n"><span class="d">18</span></span></div><div class="c" style="left:261px;top:51px;width:151px"></div>
<div class="c ind" style="left:0;top:68px;width:12px"></div><div class="c" style="left:12px;top:68px;width:107px">龙凤鸳鸯锅（大）</div><div class="c r" style="left:119px;top:68px;width:51px"><span class="n"><span class="d">20</span></span></div><div class="c r" style="left:170px;top:68px;width:44px"><span class="n"><span class="d">1</span></span></div><div class="c r" style="left:214px;top:68px;width:47px"><span class="n"><span class="d">20</span></span></div><div class="c" style="left:261px;top:68px;width:151px"><span class="n"><span class="d">111</span></span></div>
<div class="c ind" style="left:0;top:85px;width:12px"></div><div class="c" style="left:12px;top:85px;width:107px">倍佳爽</div><div class="c r" style="left:119px;top:85px;width:51px"><span class="n"><span class="d">18</span></span></div><div class="c r" style="left:170px;top:85px;width:44px"><span class="n"><span class="d">1</span></span></div><div class="c r" style="left:214px;top:85px;width:47px"><span class="n"><span class="d">18</span></span></div><div class="c" style="left:261px;top:85px;width:151px"></div>
<div class="a" style="left:0;top:106px;width:412px;height:1px;background:#000"></div><div class="c ind" style="left:0;top:107px;width:12px"></div><div class="c r" style="left:12px;top:107px;width:107px"></div><div class="c r" style="left:119px;top:107px;width:51px"></div><div class="c r" style="left:170px;top:107px;width:44px"><span class="n"><span class="d">10</span></span></div><div class="c r" style="left:214px;top:107px;width:47px"><span class="n"><span class="d">108</span></span></div><div class="c r" style="left:261px;top:107px;width:151px"></div>
</div>
<div class="a" style="left:534px;top:263px;width:852px;height:553px;border-radius:7px 7px 4px 4px;background:linear-gradient(180deg,#b9d9fb 0,#b9d9fb 30px,#a9cdf3 100%);border:1px solid #1e2630;box-shadow:3px 3px 13px 4px rgba(0,0,0,.6),inset 0 0 0 1px rgba(255,255,255,.8)"></div>
<svg class="a" style="left:541px;top:273px" width="15" height="11" viewBox="0 0 15 11"><path d="M6 0h3l1 1h2l1.500 1.500 1.500.5v2l-1.500.8 1.500 1.700v1.500l-3 .8-1.500 1.200h-5l-1.500-1.200-3-.8V7.500l1.500-1.700L2 4V2.500L3.500 1h1.500z" fill="#000"/><path d="M3.200 2.400h8.300l.7 1.600-1 3.500h-7.500l-1.100-3.500z" fill="#0c8c10"/><path d="M1.200 7.600l3-.6h6.800l3 .6-1 1.200-2.500.4-1 .8h-3.800l-1-.8-2.500-.4z" fill="#1cb82c"/><rect x="4.600" y="3" width="1" height="1" fill="#30ff40"/><rect x="6" y="3" width="2.400" height=".9" fill="#b04010"/><rect x="13" y="3.300" width="1" height="1.600" fill="#18a020"/></svg><div class="a" style="left:546px;top:264px;width:90px;height:28px;border-radius:14px;background:radial-gradient(ellipse,rgba(255,255,255,.8),rgba(255,255,255,.5) 45%,rgba(255,255,255,0) 75%)"></div>
<div class="t" style="left:562px;top:272px">增加消费</div>
<div class="a" style="left:1332px;top:264px;width:47px;height:19px;border-radius:0 0 4px 4px;border:1px solid #4a2420;border-top:none;background:linear-gradient(180deg,#e8b89c 0,#e0a08c 3px,#dc9c88 8px,#c44c3c 9px,#c44c3c 15px,#dc8c78 16px,#ecc0a0 19px);box-shadow:inset 0 0 0 1px rgba(255,255,255,.45)"></div>
<div class="t" style="left:1349px;top:263px;width:15px;text-align:center;font:bold 15px 'Liberation Sans',sans-serif;color:#fff;height:16px;line-height:16px;text-shadow:0 0 2px #4a1008,0 0 1px #4a1008">x</div>
<div class="a" style="left:540px;top:292px;width:839px;height:516px;background:#f0f0f0;border:1px solid #5a6c80;box-shadow:0 0 0 1px rgba(255,255,255,.55),inset 0 0 0 1px #fff,inset 0 0 0 2px #a0a0a0"></div>
<div class="a" style="left:544px;top:296px;width:100px;height:20px;border-top:1px solid #fff;border-left:1px solid #fff;border-right:1px solid #696969;box-shadow:inset -1px 0 0 #a0a0a0"></div>
<div class="t" style="left:551px;top:299px">消费项目<span class="n">(</span>清单<span class="n">)</span></div>
<div class="a" style="left:644px;top:315px;width:160px;height:1px;background:#fff"></div>
<div class="a" style="left:543px;top:296px;width:1px;height:508px;background:#fff"></div>
<div class="a" style="left:803px;top:316px;width:1px;height:488px;background:#a0a0a0"></div><div class="a" style="left:804px;top:315px;width:1px;height:490px;background:#696969"></div>
<div class="a" style="left:543px;top:803px;width:261px;height:1px;background:#a0a0a0"></div><div class="a" style="left:543px;top:804px;width:262px;height:1px;background:#696969"></div>
<div class="t" style="left:572px;top:326px">项目搜索<span class="n">:</span></div>
<div class="sunk" style="left:636px;top:323px;width:88px;height:19px"></div><div class="a" style="left:639px;top:326px;width:1px;height:13px;background:#000"></div>
<div class="t" style="left:613px;top:349px;color:#ff0000">注<span class="n">:&nbsp;</span>按名称或项目编号搜索</div>
<div class="t" style="left:548px;top:371px">消费数量<span class="n">[F<span class="d">2</span>]:</span></div>
<div class="sunk" style="left:636px;top:367px;width:88px;height:19px"></div><div class="t n" style="left:639px;top:369px"><span class="d">1</span></div>
<div class="btn" style="left:732px;top:365px;width:65px;height:25px;line-height:23px">增加<span class="n">[F<span class="d">3</span>]</span></div>
<div class="a" style="left:547px;top:400px;width:254px;height:401px;background:#fff;border:1px solid;border-color:#828282 #e3e3e3 #e3e3e3 #828282;box-shadow:inset 1px 1px 0 #696969"></div>
<div class="grid" style="left:550px;top:402px;width:233px;height:376px">
<div class="c ind" style="left:0;top:0;width:12px"></div><div class="c hd" style="left:12px;top:0;width:24px"><span class="n">ID</span></div><div class="c hd" style="left:36px;top:0;width:36px">项目编</div><div class="c hd" style="left:72px;top:0;width:83px">项目名称</div><div class="c hd" style="left:155px;top:0;width:40px">单价</div><div class="c hd" style="left:195px;top:0;width:39px">项目类</div>
<div class="c ind" style="left:0;top:17px;width:12px"><div class="tri" style="left:3px;top:2px"></div></div><div class="c sel" style="left:12px;top:17px;width:24px"><span class="n"><span class="d">664</span></span></div><div class="c sel" style="left:36px;top:17px;width:36px"><span class="n"><span class="d">0002</span></span></div><div class="c sel" style="left:72px;top:17px;width:83px">精品香辣锅（大</div><div class="c r sel" style="left:155px;top:17px;width:40px"><span class="n"><span class="d">16</span></span></div><div class="c sel" style="left:195px;top:17px;width:39px">火锅锅</div>
<div class="c ind" style="left:0;top:34px;width:12px"></div><div class="c" style="left:12px;top:34px;width:24px"><span class="n"><span class="d">665</span></span></div><div class="c" style="left:36px;top:34px;width:36px"><span class="n"><span class="d">0003</span></span></div><div class="c" style="left:72px;top:34px;width:83px">清香香辣锅（大</div><div class="c r" style="left:155px;top:34px;width:40px"><span class="n"><span class="d">16</span></span></div><div class="c" style="left:195px;top:34px;width:39px">火锅锅</div>
<div class="c ind" style="left:0;top:51px;width:12px"></div><div class="c" style="left:12px;top:51px;width:24px"><span class="n"><span class="d">666</span></span></div><div class="c" style="left:36px;top:51px;width:36px"><span class="n"><span class="d">0004</span></span></div><div class="c" style="left:72px;top:51px;width:83px">菌汤锅（大）</div><div class="c r" style="left:155px;top:51px;width:40px"><span class="n"><span class="d">18</span></span></div><div class="c" style="left:195px;top:51px;width:39px">火锅锅</div>
<div class="c ind" style="left:0;top:68px;width:12px"></div><div class="c" style="left:12px;top:68px;width:24px"><span class="n"><span class="d">667</span></span></div><div class="c" style="left:36px;top:68px;width:36px"><span class="n"><span class="d">0005</span></span></div><div class="c" style="left:72px;top:68px;width:83px">滋补养生锅（大</div><div class="c r" style="left:155px;top:68px;width:40px"><span class="n"><span class="d">20</span></span></div><div class="c" style="left:195px;top:68px;width:39px">火锅锅</div>
<div class="c ind" style="left:0;top:85px;width:12px"></div><div class="c" style="left:12px;top:85px;width:24px"><span class="n"><span class="d">668</span></span></div><div class="c" style="left:36px;top:85px;width:36px"><span class="n"><span class="d">0006</span></span></div><div class="c" style="left:72px;top:85px;width:83px">龙凤鸳鸯锅（大</div><div class="c r" style="left:155px;top:85px;width:40px"><span class="n"><span class="d">20</span></span></div><div class="c" style="left:195px;top:85px;width:39px">火锅锅</div>
<div class="c ind" style="left:0;top:102px;width:12px"></div><div class="c" style="left:12px;top:102px;width:24px"><span class="n"><span class="d">669</span></span></div><div class="c" style="left:36px;top:102px;width:36px"><span class="n"><span class="d">0007</span></span></div><div class="c" style="left:72px;top:102px;width:83px">自助小料（单）</div><div class="c r" style="left:155px;top:102px;width:40px"><span class="n"><span class="d">7</span></span></div><div class="c" style="left:195px;top:102px;width:39px">火锅锅</div>
<div class="c ind" style="left:0;top:119px;width:12px"></div><div class="c" style="left:12px;top:119px;width:24px"><span class="n"><span class="d">670</span></span></div><div class="c" style="left:36px;top:119px;width:36px"><span class="n"><span class="d">0008</span></span></div><div class="c" style="left:72px;top:119px;width:83px">清油麻辣锅（单</div><div class="c r" style="left:155px;top:119px;width:40px"><span class="n"><span class="d">6</span></span></div><div class="c" style="left:195px;top:119px;width:39px">火锅锅</div>
<div class="c ind" style="left:0;top:136px;width:12px"></div><div class="c" style="left:12px;top:136px;width:24px"><span class="n"><span class="d">671</span></span></div><div class="c" style="left:36px;top:136px;width:36px"><span class="n"><span class="d">0009</span></span></div><div class="c" style="left:72px;top:136px;width:83px">精品香辣锅（单</div><div class="c r" style="left:155px;top:136px;width:40px"><span class="n"><span class="d">6</span></span></div><div class="c" style="left:195px;top:136px;width:39px">火锅锅</div>
<div class="c ind" style="left:0;top:153px;width:12px"></div><div class="c" style="left:12px;top:153px;width:24px"><span class="n"><span class="d">672</span></span></div><div class="c" style="left:36px;top:153px;width:36px"><span class="n"><span class="d">0010</span></span></div><div class="c" style="left:72px;top:153px;width:83px">菌汤锅（单）</div><div class="c r" style="left:155px;top:153px;width:40px"><span class="n"><span class="d">7</span></span></div><div class="c" style="left:195px;top:153px;width:39px">火锅锅</div>
<div class="c ind" style="left:0;top:170px;width:12px"></div><div class="c" style="left:12px;top:170px;width:24px"><span class="n"><span class="d">673</span></span></div><div class="c" style="left:36px;top:170px;width:36px"><span class="n"><span class="d">0011</span></span></div><div class="c" style="left:72px;top:170px;width:83px">滋补养生锅（单</div><div class="c r" style="left:155px;top:170px;width:40px"><span class="n"><span class="d">8</span></span></div><div class="c" style="left:195px;top:170px;width:39px">火锅锅</div>
<div class="c ind" style="left:0;top:187px;width:12px"></div><div class="c" style="left:12px;top:187px;width:24px"><span class="n"><span class="d">674</span></span></div><div class="c" style="left:36px;top:187px;width:36px"><span class="n"><span class="d">0013</span></span></div><div class="c" style="left:72px;top:187px;width:83px">排骨玉米汤</div><div class="c r" style="left:155px;top:187px;width:40px"><span class="n"><span class="d">25</span></span></div><div class="c" style="left:195px;top:187px;width:39px">汤</div>
<div class="c ind" style="left:0;top:204px;width:12px"></div><div class="c" style="left:12px;top:204px;width:24px"><span class="n"><span class="d">675</span></span></div><div class="c" style="left:36px;top:204px;width:36px"><span class="n"><span class="d">0014</span></span></div><div class="c" style="left:72px;top:204px;width:83px">冬瓜排骨汤</div><div class="c r" style="left:155px;top:204px;width:40px"><span class="n"><span class="d">25</span></span></div><div class="c" style="left:195px;top:204px;width:39px">汤</div>
<div class="c ind" style="left:0;top:221px;width:12px"></div><div class="c" style="left:12px;top:221px;width:24px"><span class="n"><span class="d">676</span></span></div><div class="c" style="left:36px;top:221px;width:36px"><span class="n"><span class="d">0015</span></span></div><div class="c" style="left:72px;top:221px;width:83px">鱼头豆腐汤</div><div class="c r" style="left:155px;top:221px;width:40px"><span class="n"><span class="d">20</span></span></div><div class="c" style="left:195px;top:221px;width:39px">汤</div>
<div class="c ind" style="left:0;top:238px;width:12px"></div><div class="c" style="left:12px;top:238px;width:24px"><span class="n"><span class="d">677</span></span></div><div class="c" style="left:36px;top:238px;width:36px"><span class="n"><span class="d">0016</span></span></div><div class="c" style="left:72px;top:238px;width:83px">西红柿鸡蛋汤</div><div class="c r" style="left:155px;top:238px;width:40px"><span class="n"><span class="d">10</span></span></div><div class="c" style="left:195px;top:238px;width:39px">汤</div>
<div class="c ind" style="left:0;top:255px;width:12px"></div><div class="c" style="left:12px;top:255px;width:24px"><span class="n"><span class="d">678</span></span></div><div class="c" style="left:36px;top:255px;width:36px"><span class="n"><span class="d">0017</span></span></div><div class="c" style="left:72px;top:255px;width:83px">紫菜蛋花汤</div><div class="c r" style="left:155px;top:255px;width:40px"><span class="n"><span class="d">8</span></span></div><div class="c" style="left:195px;top:255px;width:39px">汤</div>
<div class="c ind" style="left:0;top:272px;width:12px"></div><div class="c" style="left:12px;top:272px;width:24px"><span class="n"><span class="d">679</span></span></div><div class="c" style="left:36px;top:272px;width:36px"><span class="n"><span class="d">0018</span></span></div><div class="c" style="left:72px;top:272px;width:83px">青菜豆腐汤</div><div class="c r" style="left:155px;top:272px;width:40px"><span class="n"><span class="d">8</span></span></div><div class="c" style="left:195px;top:272px;width:39px">汤</div>
<div class="c ind" style="left:0;top:289px;width:12px"></div><div class="c" style="left:12px;top:289px;width:24px"><span class="n"><span class="d">680</span></span></div><div class="c" style="left:36px;top:289px;width:36px"><span class="n"><span class="d">0019</span></span></div><div class="c" style="left:72px;top:289px;width:83px">牛初乳酸奶</div><div class="c r" style="left:155px;top:289px;width:40px"><span class="n"><span class="d">16</span></span></div><div class="c" style="left:195px;top:289px;width:39px">酒水</div>
<div class="c ind" style="left:0;top:306px;width:12px"></div><div class="c" style="left:12px;top:306px;width:24px"><span class="n"><span class="d">681</span></span></div><div class="c" style="left:36px;top:306px;width:36px"><span class="n"><span class="d">0020</span></span></div><div class="c" style="left:72px;top:306px;width:83px">倍佳爽</div><div class="c r" style="left:155px;top:306px;width:40px"><span class="n"><span class="d">18</span></span></div><div class="c" style="left:195px;top:306px;width:39px">酒水</div>
<div class="c ind" style="left:0;top:323px;width:12px"></div><div class="c" style="left:12px;top:323px;width:24px"><span class="n"><span class="d">683</span></span></div><div class="c" style="left:36px;top:323px;width:36px"><span class="n"><span class="d">0022</span></span></div><div class="c" style="left:72px;top:323px;width:83px">营养快线</div><div class="c r" style="left:155px;top:323px;width:40px"><span class="n"><span class="d">4</span></span></div><div class="c" style="left:195px;top:323px;width:39px">酒水</div>
<div class="c ind" style="left:0;top:340px;width:12px"></div><div class="c" style="left:12px;top:340px;width:24px"><span class="n"><span class="d">684</span></span></div><div class="c" style="left:36px;top:340px;width:36px"><span class="n"><span class="d">0023</span></span></div><div class="c" style="left:72px;top:340px;width:83px">可口可乐</div><div class="c r" style="left:155px;top:340px;width:40px"><span class="n"><span class="d">4</span></span></div><div class="c" style="left:195px;top:340px;width:39px">酒水</div>
<div class="c ind" style="left:0;top:357px;width:12px"></div><div class="c" style="left:12px;top:357px;width:24px"><span class="n"><span class="d">685</span></span></div><div class="c" style="left:36px;top:357px;width:36px"><span class="n"><span class="d">0024</span></span></div><div class="c" style="left:72px;top:357px;width:83px">青岛9°</div><div class="c r" style="left:155px;top:357px;width:40px"><span class="n"><span class="d">5</span></span></div><div class="c" style="left:195px;top:357px;width:39px">酒水</div>
</div>
<div class="a" style="left:783px;top:402px;width:17px;height:381px;background:linear-gradient(90deg,#e4e4e4,#f4f4f4 40%,#eaeaea)"></div>
<div class="a" style="left:787px;top:409px;width:0;height:0;border-bottom:4px solid #505050;border-left:4px solid transparent;border-right:4px solid transparent"></div>
<div class="a" style="left:784px;top:420px;width:14px;height:20px;border:1px solid #979797;border-radius:2px;background:linear-gradient(90deg,#f6f6f6,#e4e4e4 50%,#d0d0d0)"></div>
<div class="a" style="left:787px;top:427px;width:7px;height:7px;background:repeating-linear-gradient(180deg,#606060 0 1px,#f4f4f4 1px 2px)"></div>
<div class="a" style="left:787px;top:772px;width:0;height:0;border-top:4px solid #505050;border-left:4px solid transparent;border-right:4px solid transparent"></div>
<div class="a" style="left:549px;top:783px;width:234px;height:17px;background:linear-gradient(180deg,#e4e4e4,#f4f4f4 40%,#eaeaea)"></div><div class="a" style="left:783px;top:783px;width:17px;height:17px;background:#f0f0f0"></div>
<div class="a" style="left:555px;top:787px;width:0;height:0;border-right:4px solid #505050;border-top:4px solid transparent;border-bottom:4px solid transparent"></div>
<div class="a" style="left:772px;top:787px;width:0;height:0;border-left:4px solid #505050;border-top:4px solid transparent;border-bottom:4px solid transparent"></div>
<div class="a" style="left:568px;top:783px;width:53px;height:15px;border:1px solid #979797;border-radius:2px;background:linear-gradient(180deg,#f6f6f6,#e4e4e4 50%,#d0d0d0)"></div>
<div class="a" style="left:590px;top:787px;width:6px;height:7px;background:repeating-linear-gradient(90deg,#606060 0 1px,#f4f4f4 1px 2px)"></div>
<div class="a" style="left:805px;top:294px;width:1px;height:511px;background:#a0a0a0"></div><div class="a" style="left:806px;top:295px;width:1px;height:510px;background:#fff"></div>
<div class="a" style="left:806px;top:295px;width:72px;height:48px;border:1px solid;border-color:#fff #828282 #828282 #fff"></div>
<svg class="a" style="left:830px;top:300px" width="24" height="24" viewBox="0 0 24 24"><g stroke="#8a6a00" stroke-width=".6"><ellipse cx="7" cy="17" rx="6" ry="2.500" fill="#e0b020"/><ellipse cx="7" cy="14" rx="6" ry="2.500" fill="#e8bc28"/><ellipse cx="7" cy="11" rx="6" ry="2.500" fill="#f0c830"/><ellipse cx="7" cy="8" rx="6" ry="2.500" fill="#f4d040"/><ellipse cx="7" cy="5" rx="6" ry="2.500" fill="#f8d850"/><ellipse cx="17" cy="13" rx="6.500" ry="4.500" fill="#f4d040" transform="rotate(25 17 13)"/><ellipse cx="15" cy="18" rx="6" ry="2.500" fill="#e8bc28"/></g><path d="M3 16c1-7 6-9 11-8l0-3 7 6-7 6 0-3.500c-3-1-6 1-7 6z" fill="#2e9a28" stroke="#0f5a10" stroke-width=".7"/></svg>
<div class="t" style="left:806px;width:72px;text-align:center;top:328px">删除菜品</div>
<div class="a" style="left:878px;top:295px;width:72px;height:48px;border:1px solid;border-color:#fff #828282 #828282 #fff"></div>
<svg class="a" style="left:902px;top:300px" width="24" height="24" viewBox="0 0 24 24"><path d="M8.500 .5h10l5 5v17h-15z" fill="#eef5ff" stroke="#9fbde8"/><path d="M18.500 .5v5h5z" fill="#9fc0f0"/><path d="M1 13l11-4 11 3-10 5z" fill="#f2c840" stroke="#a07a10" stroke-width=".7"/><path d="M3 14l9 4 10-4v3l-10 5-9-5z" fill="#2f7fe0" stroke="#104a9a" stroke-width=".7"/><path d="M5 12.500l8-2.500 6 1.500-7 3z" fill="#fbe48a"/></svg>
<div class="t" style="left:878px;width:72px;text-align:center;top:328px">顾客赠菜</div>
<div class="a" style="left:950px;top:295px;width:72px;height:48px;border:1px solid;border-color:#fff #828282 #828282 #fff"></div>
<svg class="a" style="left:974px;top:300px" width="24" height="24" viewBox="0 0 24 24"><rect x=".5" y=".5" width="14" height="17" rx="1" fill="#22a022" stroke="#0c6a10"/><rect x="9.500" y="6.500" width="13" height="16" fill="#f4f8ff" stroke="#7fa0d8"/><path d="M12 11.500h9M12 14h9M12 16.500h9M12 19h9" stroke="#8a8ac8" stroke-width=".8"/><rect x="3.500" y="8" width="8" height="5" rx="2.500" fill="none" stroke="#e8a800" stroke-width="1.800"/><rect x="9.500" y="8" width="8" height="5" rx="2.500" fill="none" stroke="#e8a800" stroke-width="1.800"/></svg>
<div class="t" style="left:950px;width:72px;text-align:center;top:328px">菜品转台</div>
<div class="a" style="left:1022px;top:295px;width:73px;height:48px;border:1px solid;border-color:#fff #828282 #828282 #fff"></div>
<svg class="a" style="left:1046px;top:300px" width="24" height="24" viewBox="0 0 24 24"><path d="M1 6l3-4 7 1 2 2 9-1-2 16-16 2z" fill="#f4c850" stroke="#b08820" stroke-width=".7"/><path d="M3 8l17-3-3 15-13 2z" fill="#fbe6a0" stroke="#c8a040" stroke-width=".5"/><path d="M5 2.500l12-1.500 1 5-13 2z" fill="#fff" stroke="#bbb" stroke-width=".5"/><path d="M6 20l11-14 3.500 2.500-11 14-4 1.500z" fill="#4a5a88" stroke="#222" stroke-width=".7"/><path d="M17 6l1.800-2.200c1.500-1.500 5 1 3.700 2.700l-2 2z" fill="#e02020" stroke="#800" stroke-width=".5"/><path d="M6 20l-.5 4 4-1.500z" fill="#222"/></svg>
<div class="t" style="left:1022px;width:73px;text-align:center;top:328px">菜品备注</div>
<div class="t" style="left:814px;top:351px">消费清单</div><div class="t" style="left:933px;top:351px">餐桌号：</div><div class="t" style="left:997px;top:351px"><span class="n"><span class="d">2</span></span>号圆桌</div><div class="t" style="left:1101px;top:351px">单号：</div><div class="t n" style="left:1149px;top:351px"><span class="d">201402240005</span></div>
<div class="a" style="left:808px;top:370px;width:566px;height:368px;background:#fff;border:1px solid;border-color:#828282 #e3e3e3 #e3e3e3 #828282;box-shadow:inset 1px 1px 0 #696969"></div>
<div class="grid" style="left:810px;top:372px;width:440px;height:365px">
<div class="c ind" style="left:0;top:0;width:12px"></div><div class="c hd" style="left:12px;top:0;width:143px">消费项目</div><div class="c hd" style="left:155px;top:0;width:47px">单价</div><div class="c hd" style="left:202px;top:0;width:40px">数量</div><div class="c hd" style="left:242px;top:0;width:47px">金额</div><div class="c hd" style="left:289px;top:0;width:151px">备注</div>
<div class="c ind" style="left:0;top:17px;width:12px"><div class="tri" style="left:3px;top:2px"></div></div><div class="c gr" style="left:12px;top:17px;width:143px">精品香辣锅（大）</div><div class="c r" style="left:155px;top:17px;width:47px"><span class="n"><span class="d">16</span></span></div><div class="c r" style="left:202px;top:17px;width:40px"><span class="n"><span class="d">1</span></span></div><div class="c r" style="left:242px;top:17px;width:47px"><span class="n"><span class="d">16</span></span></div><div class="c" style="left:289px;top:17px;width:151px"><span class="n"><span class="d">3333</span></span></div>
<div class="c ind" style="left:0;top:34px;width:12px"></div><div class="c gr" style="left:12px;top:34px;width:143px">清香香辣锅（大）</div><div class="c r" style="left:155px;top:34px;width:47px"><span class="n"><span class="d">16</span></span></div><div class="c r" style="left:202px;top:34px;width:40px"><span class="n"><span class="d">1</span></span></div><div class="c r" style="left:242px;top:34px;width:47px"><span class="n"><span class="d">16</span></span></div><div class="c" style="left:289px;top:34px;width:151px"></div>
<div class="c ind" style="left:0;top:51px;width:12px"></div><div class="c gr" style="left:12px;top:51px;width:143px">菌汤锅（大）</div><div class="c r" style="left:155px;top:51px;width:47px"><span class="n"><span class="d">18</span></span></div><div class="c r" style="left:202px;top:51px;width:40px"><span class="n"><span class="d">1</span></span></div><div class="c r" style="left:242px;top:51px;width:47px"><span class="n"><span class="d">18</span></span></div><div class="c" style="left:289px;top:51px;width:151px"></div>
<div class="c ind" style="left:0;top:68px;width:12px"></div><div class="c gr" style="left:12px;top:68px;width:143px">龙凤鸳鸯锅（大）</div><div class="c r" style="left:155px;top:68px;width:47px"><span class="n"><span class="d">20</span></span></div><div class="c r" style="left:202px;top:68px;width:40px"><span class="n"><span class="d">1</span></span></div><div class="c r" style="left:242px;top:68px;width:47px"><span class="n"><span class="d">20</span></span></div><div class="c" style="left:289px;top:68px;width:151px"><span class="n"><span class="d">111</span></span></div>
<div class="c ind" style="left:0;top:85px;width:12px"></div><div class="c gr" style="left:12px;top:85px;width:143px">倍佳爽</div><div class="c r" style="left:155px;top:85px;width:47px"><span class="n"><span class="d">18</span></span></div><div class="c r" style="left:202px;top:85px;width:40px"><span class="n"><span class="d">1</span></span></div><div class="c r" style="left:242px;top:85px;width:47px"><span class="n"><span class="d">18</span></span></div><div class="c" style="left:289px;top:85px;width:151px"></div>
<div class="c ind" style="left:0;top:102px;width:12px"></div><div class="c gr" style="left:12px;top:102px;width:143px">营养快线</div><div class="c r" style="left:155px;top:102px;width:47px"><span class="n"><span class="d">4</span></span></div><div class="c r" style="left:202px;top:102px;width:40px"><span class="n"><span class="d">5</span></span></div><div class="c r" style="left:242px;top:102px;width:47px"><span class="n"><span class="d">20</span></span></div><div class="c" style="left:289px;top:102px;width:151px"></div>
<div class="a" style="left:0;top:346px;width:440px;height:1px;background:#000"></div><div class="c ind" style="left:0;top:347px;width:12px"></div><div class="c r" style="left:12px;top:347px;width:143px"></div><div class="c r" style="left:155px;top:347px;width:47px"></div><div class="c r" style="left:202px;top:347px;width:40px"><span class="n"><span class="d">10</span></span></div><div class="c r" style="left:242px;top:347px;width:47px"><span class="n"><span class="d">108</span></span></div><div class="c r" style="left:289px;top:347px;width:151px"></div>
</div>
<div class="a" style="left:1356px;top:372px;width:17px;height:365px;background:linear-gradient(90deg,#e4e4e4,#f4f4f4 40%,#eaeaea)"></div>
<div class="a" style="left:1360px;top:378px;width:0;height:0;border-bottom:4px solid #505050;border-left:4px solid transparent;border-right:4px solid transparent"></div>
<div class="a" style="left:1357px;top:390px;width:15px;height:178px;border:1px solid #979797;border-radius:2px;background:linear-gradient(90deg,#f6f6f6,#e4e4e4 50%,#d0d0d0)"></div>
<div class="a" style="left:1361px;top:475px;width:7px;height:7px;background:repeating-linear-gradient(180deg,#606060 0 1px,#f4f4f4 1px 2px)"></div>
<div class="a" style="left:1360px;top:726px;width:0;height:0;border-top:4px solid #505050;border-left:4px solid transparent;border-right:4px solid transparent"></div>
<div class="t" style="left:822px;top:745px">备注<span class="n">:</span></div>
<div class="hsep" style="left:808px;top:761px;width:567px"></div>
<div class="t" style="left:822px;top:769px;color:#0000ff">注<span class="n">:&nbsp;</span>按<span style="font:bold 11.500px Liberation Serif,serif;letter-spacing:-1.6px;margin-right:1.6px">DEL</span>快速删除菜品</div>
<div class="sunk" style="left:823px;top:787px;width:13px;height:13px"></div>
<div class="t" style="left:841px;top:787px">新增菜品同时打印到后橱</div>
<div class="t" style="left:991px;top:785px">打印</div>
<div class="sunk" style="left:1023px;top:780px;width:44px;height:19px"></div><div class="t n" style="left:1026px;top:782px"><span class="d">1</span></div>
<div class="t" style="left:1073px;top:785px">张小票</div>
<div class="btn" style="left:1198px;top:774px;width:75px;height:25px"></div>
<svg class="a" style="left:1203px;top:779px" width="16" height="16" viewBox="0 0 16 16"><path d="M.5.5h15v15h-15z" fill="#109018"/><rect x="3" y="1" width="10" height="6.500" fill="#f4f4f4"/><rect x="3.500" y="10" width="9" height="5.500" fill="#e8e8e8"/><rect x="5" y="11" width="2.500" height="4" fill="#109018"/></svg>
<div class="t" style="left:1222px;top:781px">保存<span class="n">[F<span class="d">5</span>]</span></div>
<div class="btn" style="left:1286px;top:774px;width:76px;height:25px"></div>
<svg class="a" style="left:1290px;top:778px" width="18" height="18" viewBox="0 0 18 18"><path d="M1.500 1.500l15 15M16.500 1.500l-15 15" stroke="#e81a10" stroke-width="1.800" stroke-linecap="round"/><path d="M1.500 16.500l3.500-5" stroke="#e85a10" stroke-width="2.200" stroke-linecap="round"/></svg>
<div class="t" style="left:1311px;top:781px">取消<span class="n">[F<span class="d">8</span>]</span></div>
</body></html>
